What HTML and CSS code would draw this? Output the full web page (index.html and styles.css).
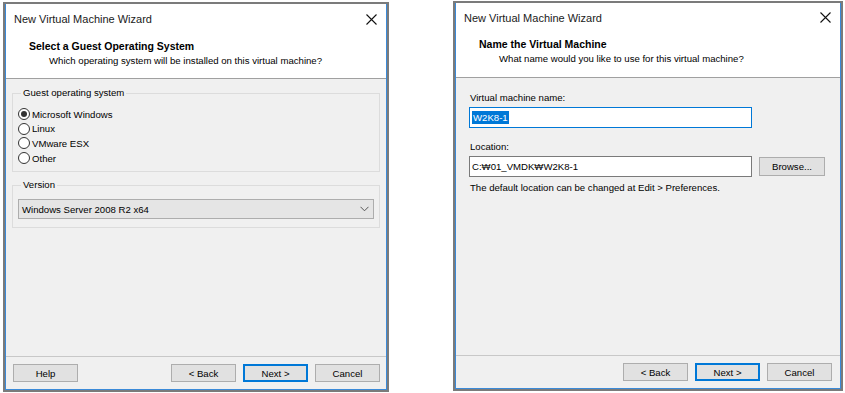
FILE: index.html
```html
<!DOCTYPE html>
<html lang="en">
<head>
  <meta charset="UTF-8" />
  <title>New Virtual Machine Wizard</title>
  <link rel="stylesheet" href="styles.css">
</head>
<body>
  <div class="dialog dialog-os">
    <div class="titlebar">
      <span class="title">New Virtual Machine Wizard</span>
      <svg class="close" width="11" height="11" viewBox="0 0 11 11"><path d="M0.5 0.5 L10.5 10.5 M10.5 0.5 L0.5 10.5" stroke="#111" stroke-width="1.1" fill="none"/></svg>
    </div>
    <div class="header">
      <div class="heading">Select a Guest Operating System</div>
      <div class="subheading">Which operating system will be installed on this virtual machine?</div>
    </div>
    <div class="body">
      <fieldset class="group group-os">
        <legend>Guest operating system</legend>
        <label class="radio"><span class="dot checked"></span>Microsoft Windows</label>
        <label class="radio"><span class="dot"></span>Linux</label>
        <label class="radio"><span class="dot"></span>VMware ESX</label>
        <label class="radio"><span class="dot"></span>Other</label>
      </fieldset>
      <fieldset class="group group-version">
        <legend>Version</legend>
        <div class="select">
          <span>Windows Server 2008 R2 x64</span>
          <svg width="9" height="6" viewBox="0 0 9 6"><path d="M0.5 0.8 L4.5 4.8 L8.5 0.8" stroke="#555" stroke-width="1" fill="none"/></svg>
        </div>
      </fieldset>
    </div>
    <div class="footer">
      <button class="btn">Help</button>
      <span class="spacer"></span>
      <button class="btn">&lt; Back</button>
      <button class="btn default">Next &gt;</button>
      <button class="btn">Cancel</button>
    </div>
  </div>

  <div class="dialog dialog-name">
    <div class="titlebar">
      <span class="title">New Virtual Machine Wizard</span>
      <svg class="close" width="11" height="11" viewBox="0 0 11 11"><path d="M0.5 0.5 L10.5 10.5 M10.5 0.5 L0.5 10.5" stroke="#111" stroke-width="1.1" fill="none"/></svg>
    </div>
    <div class="header">
      <div class="heading">Name the Virtual Machine</div>
      <div class="subheading">What name would you like to use for this virtual machine?</div>
    </div>
    <div class="body body-name">
      <div class="field-label">Virtual machine name:</div>
      <div class="input focused"><span class="selected">W2K8-1</span></div>
      <div class="field-label location-label">Location:</div>
      <div class="row">
        <div class="input">C:&#8361;01_VMDK&#8361;W2K8-1</div>
        <button class="btn browse">Browse...</button>
      </div>
      <div class="hint">The default location can be changed at Edit &gt; Preferences.</div>
    </div>
    <div class="footer">
      <span class="spacer"></span>
      <button class="btn">&lt; Back</button>
      <button class="btn default">Next &gt;</button>
      <button class="btn">Cancel</button>
    </div>
  </div>
</body>
</html>
```

FILE: styles.css
```css
* {
  box-sizing: border-box;
}

body {
  margin: 0;
  width: 845px;
  height: 393px;
  background: #ffffff;
  display: flex;
  align-items: flex-start;
  font-family: "Liberation Sans", Arial, sans-serif;
  font-size: 9.6px;
  color: #000;
  overflow: hidden;
}

.dialog {
  display: flex;
  flex-direction: column;
  border: 2px solid #7b7b7b;
  box-shadow: inset 1px 0 #3b8ad8, inset -1px 0 #3b8ad8, inset 0 -1px #3b8ad8;
  background: #f0f0f0;
}

.dialog-os {
  margin: 2px 0 0 3px;
  width: 386px;
  height: 390px;
}

.dialog-name {
  margin: 1px 0 0 64px;
  width: 390px;
  height: 390px;
}

.titlebar {
  height: 30px;
  background: #fff;
  display: flex;
  align-items: center;
  padding: 0 9px 0 8px;
  margin: 0 1px;
}

.dialog-name .titlebar {
  height: 29px;
}

.title {
  flex: 1;
  font-size: 11px;
  color: #1a1a1a;
}

.header {
  background: #fff;
  height: 45px;
  margin: 0 1px;
  padding: 5px 0 0 23px;
  border-bottom: 1px solid #a0a0a0;
}

.dialog-name .header {
  height: 46px;
}

.heading {
  font-weight: bold;
  font-size: 10.5px;
  line-height: 14px;
}

.subheading {
  padding-left: 20px;
  line-height: 15px;
}

.body {
  flex: 1;
  padding: 8px 7px 0 7px;
}

.group {
  margin: 0;
  border: 1px solid #dcdcdc;
  padding: 8px 5px 6px 5px;
}

.group legend {
  padding: 0 2px;
  margin-left: 3px;
  line-height: 12px;
}

.group-os {
  height: 85px;
}

.group-version {
  margin-top: 7px;
  height: 49px;
}

.radio {
  display: flex;
  align-items: center;
  height: 14.6px;
}

.dot {
  width: 12px;
  height: 12px;
  border: 1px solid #333;
  border-radius: 50%;
  margin-right: 2px;
  background: #fff;
  position: relative;
}

.dot.checked::after {
  content: "";
  position: absolute;
  left: 2px;
  top: 2px;
  width: 6px;
  height: 6px;
  border-radius: 50%;
  background: #333;
}

.select {
  height: 20px;
  border: 1px solid #adadad;
  background: #e5e5e5;
  display: flex;
  align-items: center;
  justify-content: space-between;
  padding: 0 4px 0 3px;
}

.footer {
  height: 33px;
  margin: 0 1px 1px 1px;
  border-top: 1px solid #c8c8c8;
  display: flex;
  align-items: flex-start;
  gap: 7px;
  padding: 7px 6px 0 7px;
}

.dialog-name .footer {
  padding-right: 8px;
}

.spacer {
  flex: 1;
}

.btn {
  width: 65px;
  height: 18px;
  padding: 0;
  background: #e1e1e1;
  border: 1px solid #adadad;
  font-family: inherit;
  font-size: 9.6px;
  color: #000;
}

.btn.default {
  border: 1px solid #0078d7;
  box-shadow: inset 0 0 0 1px #0078d7;
}

.body-name {
  padding: 14px 0 0 14px;
}

.field-label {
  line-height: 12px;
  padding-left: 1px;
}

.input {
  width: 283px;
  height: 21px;
  margin-top: 3px;
  border: 1px solid #7a7a7a;
  background: #fff;
  padding: 0 2px;
  display: flex;
  align-items: center;
}

.input.focused {
  border-color: #0078d7;
}

.selected {
  background: #0078d7;
  color: #fff;
  padding: 0 1px;
  line-height: 13px;
}

.location-label {
  margin-top: 13px;
}

.row {
  display: flex;
  align-items: flex-end;
  gap: 7px;
}

.browse {
  width: 66px;
  height: 19px;
  margin-bottom: 1px;
}

.hint {
  margin-top: 5px;
  line-height: 12px;
  padding-left: 1px;
}
```
